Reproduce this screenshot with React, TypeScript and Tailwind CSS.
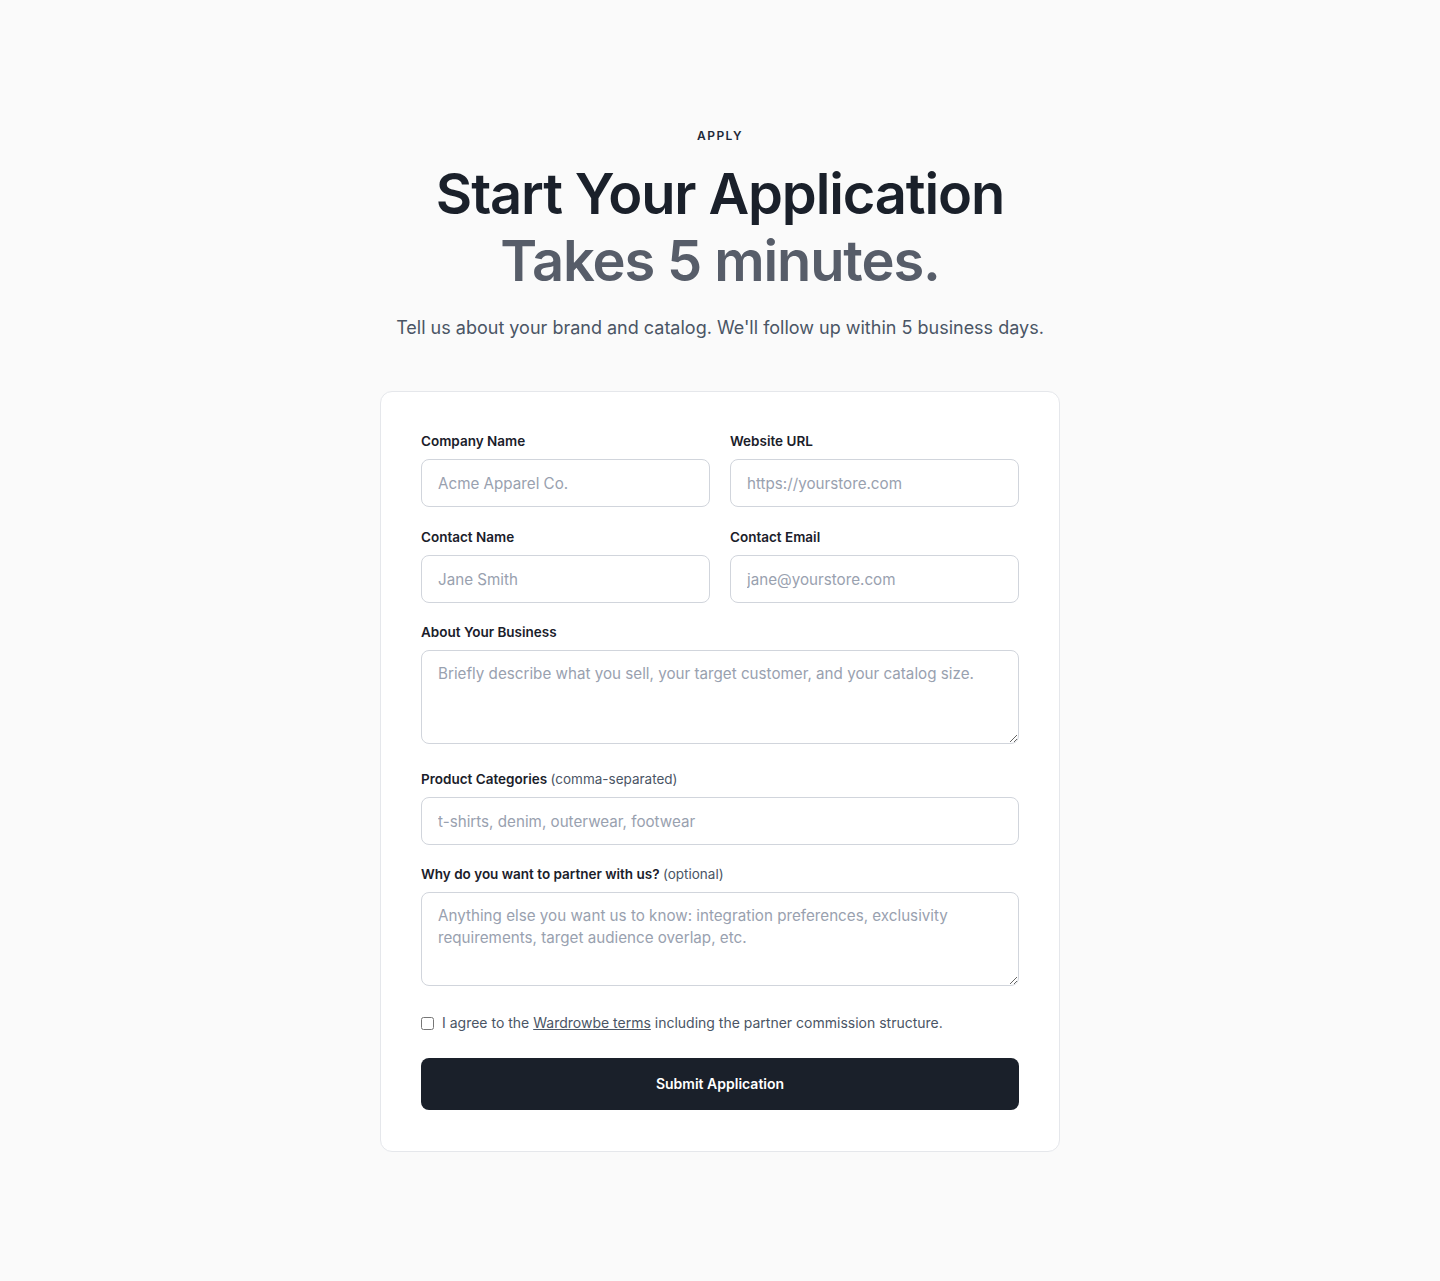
export default function App() {
  const input =
    "w-full h-12 rounded-lg border border-gray-300 bg-white px-4 text-[15.2px] text-gray-900 placeholder:text-gray-400 outline-none";
  const area =
    "w-full h-[94px] rounded-lg border border-gray-300 bg-white px-4 py-3 text-[15.2px] leading-[22px] text-gray-900 placeholder:text-gray-400 outline-none";
  const label = "block mb-2 text-[13.5px] leading-5 font-semibold text-[#1a202a]";

  return (
    <div
      className="min-h-screen bg-[#fafafa] pt-[128px] pb-[129px]"
      style={{ fontFamily: "Inter, 'Noto Sans', sans-serif" }}
    >
      <div className="flex flex-col items-center text-center">
        <p className="text-xs font-semibold tracking-[0.12em] text-gray-800">APPLY</p>
        <h1 className="mt-[17px] text-[56px] font-semibold leading-[67px] tracking-[-0.02em] text-[#1a202a]">
          Start Your Application
          <br />
          <span className="text-[#575d69]">Takes 5 minutes.</span>
        </h1>
        <p className="mt-[19px] text-lg text-gray-600">
          Tell us about your brand and catalog. We'll follow up within 5 business days.
        </p>
      </div>

      <div className="mx-auto mt-[49px] w-[680px] rounded-xl border border-gray-200 bg-white px-10 pt-[39px] pb-[41px]">
        <form className="flex flex-col gap-[19px]" onSubmit={(e) => e.preventDefault()}>
          <div className="grid grid-cols-2 gap-5">
            <div>
              <label className={label}>Company Name</label>
              <input className={input} placeholder="Acme Apparel Co." />
            </div>
            <div>
              <label className={label}>Website URL</label>
              <input className={input} placeholder="https://yourstore.com" />
            </div>
            <div>
              <label className={label}>Contact Name</label>
              <input className={input} placeholder="Jane Smith" />
            </div>
            <div>
              <label className={label}>Contact Email</label>
              <input className={input} placeholder="jane@yourstore.com" />
            </div>
          </div>

          <div>
            <label className={label}>About Your Business</label>
            <textarea
              rows={3}
              className={area}
              placeholder="Briefly describe what you sell, your target customer, and your catalog size."
            />
          </div>

          <div>
            <label className={label}>
              Product Categories{" "}
              <span className="font-normal text-gray-600">(comma-separated)</span>
            </label>
            <input className={input} placeholder="t-shirts, denim, outerwear, footwear" />
          </div>

          <div>
            <label className={label}>
              Why do you want to partner with us?{" "}
              <span className="font-normal text-gray-600">(optional)</span>
            </label>
            <textarea
              rows={3}
              className={area}
              placeholder="Anything else you want us to know: integration preferences, exclusivity requirements, target audience overlap, etc."
            />
          </div>

          <label className="mt-[2px] flex items-center gap-2 text-sm text-gray-600">
            <input type="checkbox" className="h-[13px] w-[13px]" />
            <span>
              I agree to the{" "}
              <a href="#" className="underline">
                Wardrowbe terms
              </a>{" "}
              including the partner commission structure.
            </span>
          </label>

          <button
            type="submit"
            className="mt-[6px] h-[52px] w-full rounded-lg bg-[#1a202a] text-sm font-semibold text-white"
          >
            Submit Application
          </button>
        </form>
      </div>
    </div>
  );
}
